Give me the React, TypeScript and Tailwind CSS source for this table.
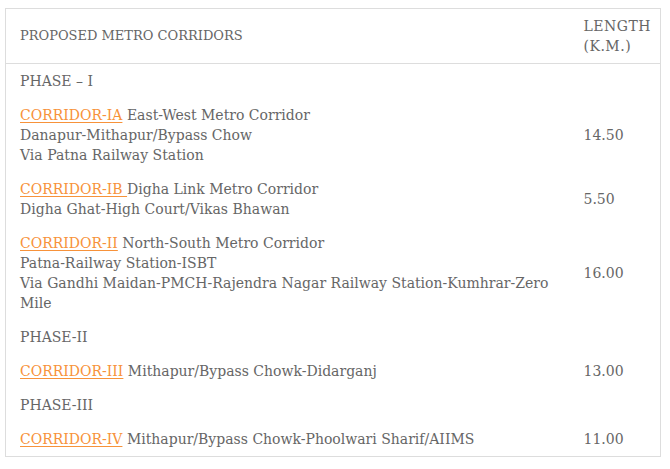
type Row =
  | { kind: "phase"; label: string }
  | { kind: "corridor"; code: string; lines: string[]; length: string };

const rows: Row[] = [
  { kind: "phase", label: "PHASE – I" },
  {
    kind: "corridor",
    code: "CORRIDOR-IA",
    lines: [
      "East-West Metro Corridor",
      "Danapur-Mithapur/Bypass Chow",
      "Via Patna Railway Station",
    ],
    length: "14.50",
  },
  {
    kind: "corridor",
    code: "CORRIDOR-IB ",
    lines: ["Digha Link Metro Corridor", "Digha Ghat-High Court/Vikas Bhawan"],
    length: "5.50",
  },
  {
    kind: "corridor",
    code: "CORRIDOR-II",
    lines: [
      "North-South Metro Corridor",
      "Patna-Railway Station-ISBT",
      "Via Gandhi Maidan-PMCH-Rajendra Nagar Railway Station-Kumhrar-Zero Mile",
    ],
    length: "16.00",
  },
  { kind: "phase", label: "PHASE-II" },
  {
    kind: "corridor",
    code: "CORRIDOR-III",
    lines: ["Mithapur/Bypass Chowk-Didarganj"],
    length: "13.00",
  },
  { kind: "phase", label: "PHASE-III" },
  {
    kind: "corridor",
    code: "CORRIDOR-IV",
    lines: ["Mithapur/Bypass Chowk-Phoolwari Sharif/AIIMS"],
    length: "11.00",
  },
];

export default function App() {
  return (
    <div className="w-[670px] h-[469px] bg-white pl-[5px] pt-[8px] pr-[9px] font-['DejaVu_Serif',serif] text-[14px] leading-[20px] text-[#666]">
      <table className="w-full border-collapse border border-[#dddddd]">
        <thead>
          <tr className="border-b border-[#dddddd]">
            <th className="text-left font-normal align-middle pl-[14px] pr-[14px] py-[7px] text-[13px]">
              PROPOSED METRO CORRIDORS
            </th>
            <th className="text-left font-normal align-middle w-[91px] pl-[14px] pr-[4px] py-[7px] tracking-[0.5px]">
              LENGTH
              <br />
              (K.M.)
            </th>
          </tr>
        </thead>
        <tbody>
          {rows.map((row, i) =>
            row.kind === "phase" ? (
              <tr key={i}>
                <td className="pl-[14px] pr-[14px] py-[7px]">{row.label}</td>
                <td className="py-[7px]"></td>
              </tr>
            ) : (
              <tr key={i}>
                <td className="pl-[14px] pr-[14px] py-[7px] align-middle">
                  <a href="#" className="text-[#f7923a] underline underline-offset-2">
                    {row.code}
                  </a>{" "}
                  {row.lines[0]}
                  {row.lines.slice(1).map((l, j) => (
                    <span key={j}>
                      <br />
                      {l}
                    </span>
                  ))}
                </td>
                <td className="pl-[14px] py-[7px] align-middle">{row.length}</td>
              </tr>
            )
          )}
        </tbody>
      </table>
    </div>
  );
}
